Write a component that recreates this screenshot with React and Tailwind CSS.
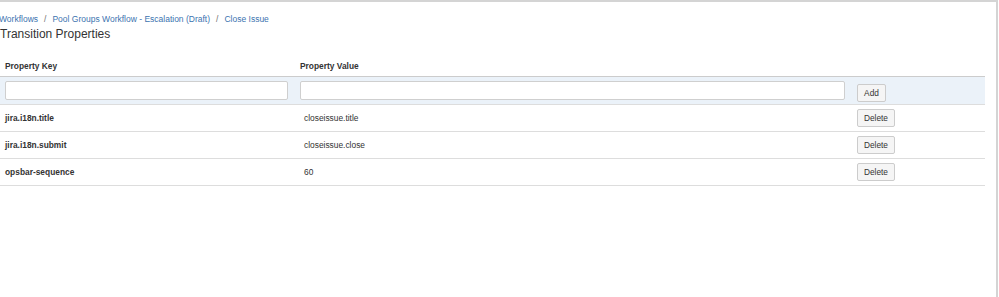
export default function App() {
  const rows = [
    ["jira.i18n.title", "closeissue.title"],
    ["jira.i18n.submit", "closeissue.close"],
    ["opsbar-sequence", "60"],
  ];
  return (
    <div
      className="w-[998px] h-[297px] border-t-2 border-r-2 border-[#d4d4d4] bg-white text-[#333]"
      style={{ fontFamily: '"Liberation Sans", Arial, sans-serif' }}
    >
      <div className="pt-[11px] w-[985px]">
        <div className="h-[12px] leading-[12px] text-[8.5px] text-[#3b73af] whitespace-nowrap -ml-[1px]">
          <span>Workflows</span>
          <span className="text-[#707070] mx-[6px]">/</span>
          <span>Pool Groups Workflow - Escalation (Draft)</span>
          <span className="text-[#707070] mx-[6px]">/</span>
          <span>Close Issue</span>
        </div>
        <div className="mt-[1px] h-[16px] leading-[16px] text-[12px] text-[#333]">
          Transition Properties
        </div>
        <div className="mt-[14px] h-[21px] grid grid-cols-[295px_557px_1fr] items-center border-b border-[#cccccc] text-[8.4px] font-bold text-[#333]">
          <div className="pl-[5px]">Property Key</div>
          <div className="pl-[5px]">Property Value</div>
          <div></div>
        </div>
        <div className="h-[28px] grid grid-cols-[295px_557px_1fr] items-center bg-[#ebf2f9] border-b border-[#dddddd]">
          <div className="pl-[5px]">
            <div className="w-[283px] h-[19px] bg-white border border-[#cfcfcf] rounded-[2px]" />
          </div>
          <div className="pl-[5px]">
            <div className="w-[545px] h-[19px] bg-white border border-[#cfcfcf] rounded-[2px]" />
          </div>
          <div className="pl-[5px]">
            <button className="w-[29px] h-[18px] bg-[#f5f5f5] border border-[#cccccc] rounded-[2px] text-[8.3px] text-[#333] leading-none">
              Add
            </button>
          </div>
        </div>
        {rows.map(([k, v]) => (
          <div
            key={k}
            className="h-[27px] grid grid-cols-[295px_557px_1fr] items-center border-b border-[#dddddd] text-[8.4px]"
          >
            <div className="pl-[5px] font-bold text-[#333]">{k}</div>
            <div className="pl-[9px] text-[#333]">{v}</div>
            <div className="pl-[5px]">
              <button className="w-[38px] h-[18px] bg-[#f5f5f5] border border-[#cccccc] rounded-[2px] text-[8.3px] text-[#333] leading-none">
                Delete
              </button>
            </div>
          </div>
        ))}
      </div>
    </div>
  );
}
